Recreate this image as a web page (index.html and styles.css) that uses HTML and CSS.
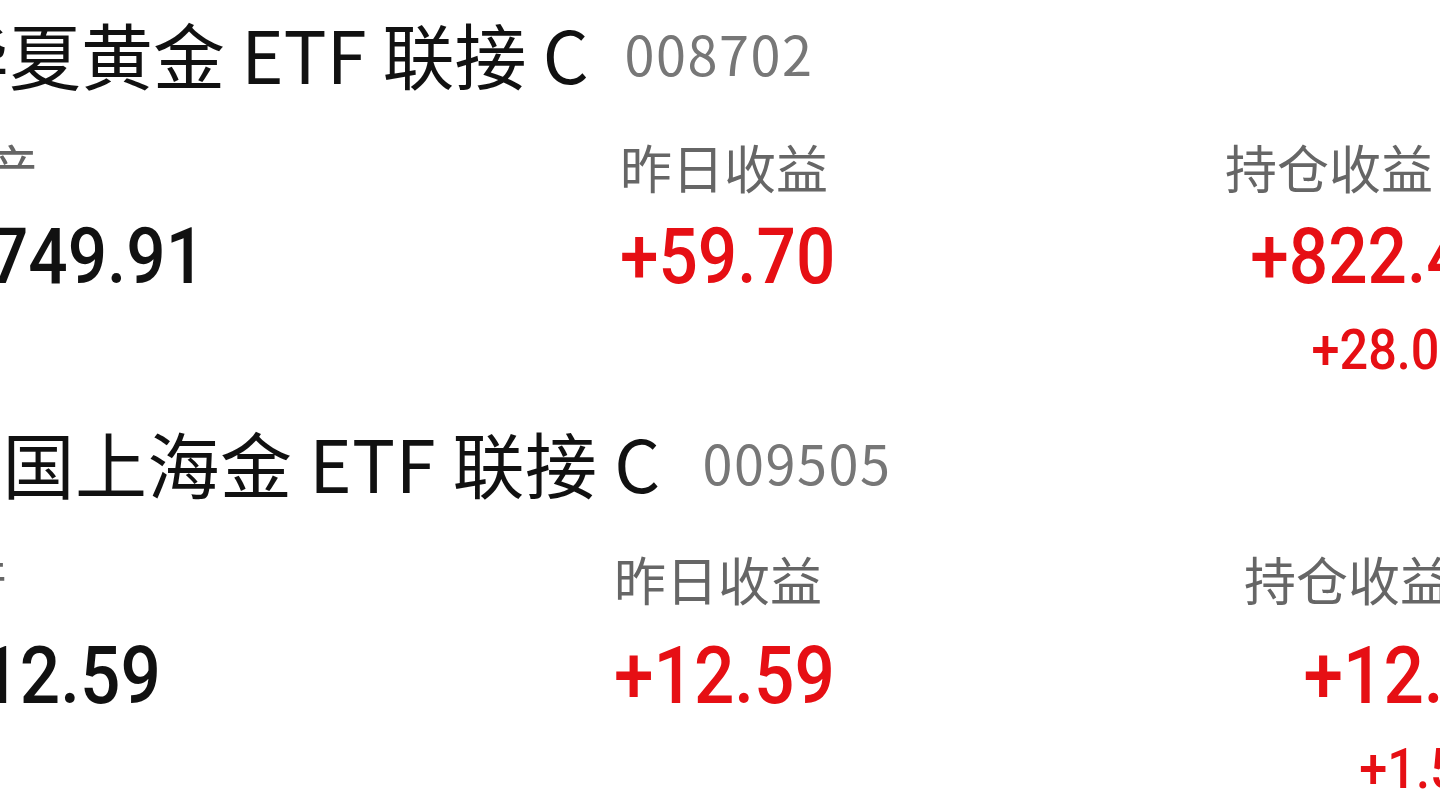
FILE: index.html
```html
<!DOCTYPE html>
<html lang="zh-CN">
<head>
    <meta charset="UTF-8">
    <meta name="viewport" content="width=device-width, initial-scale=1.0">
    <title>持有基金</title>
    <link rel="stylesheet" href="styles.css">
</head>
<body>
    <div class="list">
        <section class="fund">
            <div class="fund-head">
                <span class="fund-name">华夏黄金 ETF 联接 C</span>
                <span class="fund-code">008702</span>
            </div>
            <div class="fund-stats">
                <div class="stat">
                    <div class="stat-label">资产</div>
                    <div class="stat-value black">1,749.91</div>
                </div>
                <div class="stat">
                    <div class="stat-label">昨日收益</div>
                    <div class="stat-value red">+59.70</div>
                </div>
                <div class="stat stat-right">
                    <div class="stat-label">持仓收益</div>
                    <div class="stat-value red">+822.47</div>
                    <div class="stat-rate red">+28.03%</div>
                </div>
            </div>
        </section>

        <section class="fund fund-second">
            <div class="fund-head">
                <span class="fund-name">富国上海金 ETF 联接 C</span>
                <span class="fund-code">009505</span>
            </div>
            <div class="fund-stats">
                <div class="stat">
                    <div class="stat-label">资产</div>
                    <div class="stat-value black">112.59</div>
                </div>
                <div class="stat">
                    <div class="stat-label">昨日收益</div>
                    <div class="stat-value red">+12.59</div>
                </div>
                <div class="stat stat-right">
                    <div class="stat-label">持仓收益</div>
                    <div class="stat-value red">+12.59</div>
                    <div class="stat-rate red">+1.59%</div>
                </div>
            </div>
        </section>
    </div>
</body>
</html>
```

FILE: styles.css
```css
html, body {
    margin: 0;
    padding: 0;
    background-color: #fff;
    overflow: hidden;
}

body {
    font-family: "Noto Sans CJK SC", "Noto Sans", sans-serif;
    color: #111;
}

.list {
    margin-left: -66px;
    padding-top: 3px;
}

.fund {
    padding-bottom: 32px;
}

.fund-head {
    display: flex;
    align-items: center;
    height: 100px;
    line-height: 100px;
    white-space: pre;
}

.fund-name {
    font-size: 72px;
    color: #111;
    margin-left: 3px;
}

.fund-second .fund-name {
    margin-left: -4px;
    letter-spacing: 0.5px;
}

.fund-code {
    font-size: 54px;
    color: #777;
    margin-left: 36px;
    letter-spacing: 1.5px;
}

.fund-second .fund-code {
    margin-left: 42px;
}

.fund-stats {
    display: grid;
    grid-template-columns: 686px 605px 280px;
    align-items: start;
    margin-top: 34px;
}

.fund-second .fund-stats {
    grid-template-columns: 680px 630px 280px;
    margin-top: 37px;
}

.fund-second .stat:first-child .stat-label {
    margin-left: -30px;
}

.fund-second .stat:first-child .stat-value {
    margin-left: 5px;
}

.stat {
    display: flex;
    flex-direction: column;
    align-items: flex-start;
}

.stat-right {
    align-items: flex-end;
}

.stat-label {
    font-size: 52px;
    line-height: 60px;
    color: #666;
}

.stat-right .stat-label {
    padding-right: 72px;
}

.stat-value,
.stat-rate {
    display: inline-block;
    font-family: Roboto, "Liberation Sans", sans-serif;
    font-weight: 500;
    transform: scaleX(0.9); /* digits are narrow in the app */
    transform-origin: left center;
}

.stat-right .stat-value,
.stat-right .stat-rate {
    transform-origin: right center;
}

.stat-value {
    font-size: 77px;
    line-height: 90px;
    margin-top: 15px;
}

.fund-second .stat-value {
    font-size: 79px;
    margin-top: 22px;
}

.stat-rate {
    font-size: 56px;
    line-height: 60px;
    margin-top: 18px;
}

.red {
    color: #e60f14;
}

.black {
    color: #111;
}
```
